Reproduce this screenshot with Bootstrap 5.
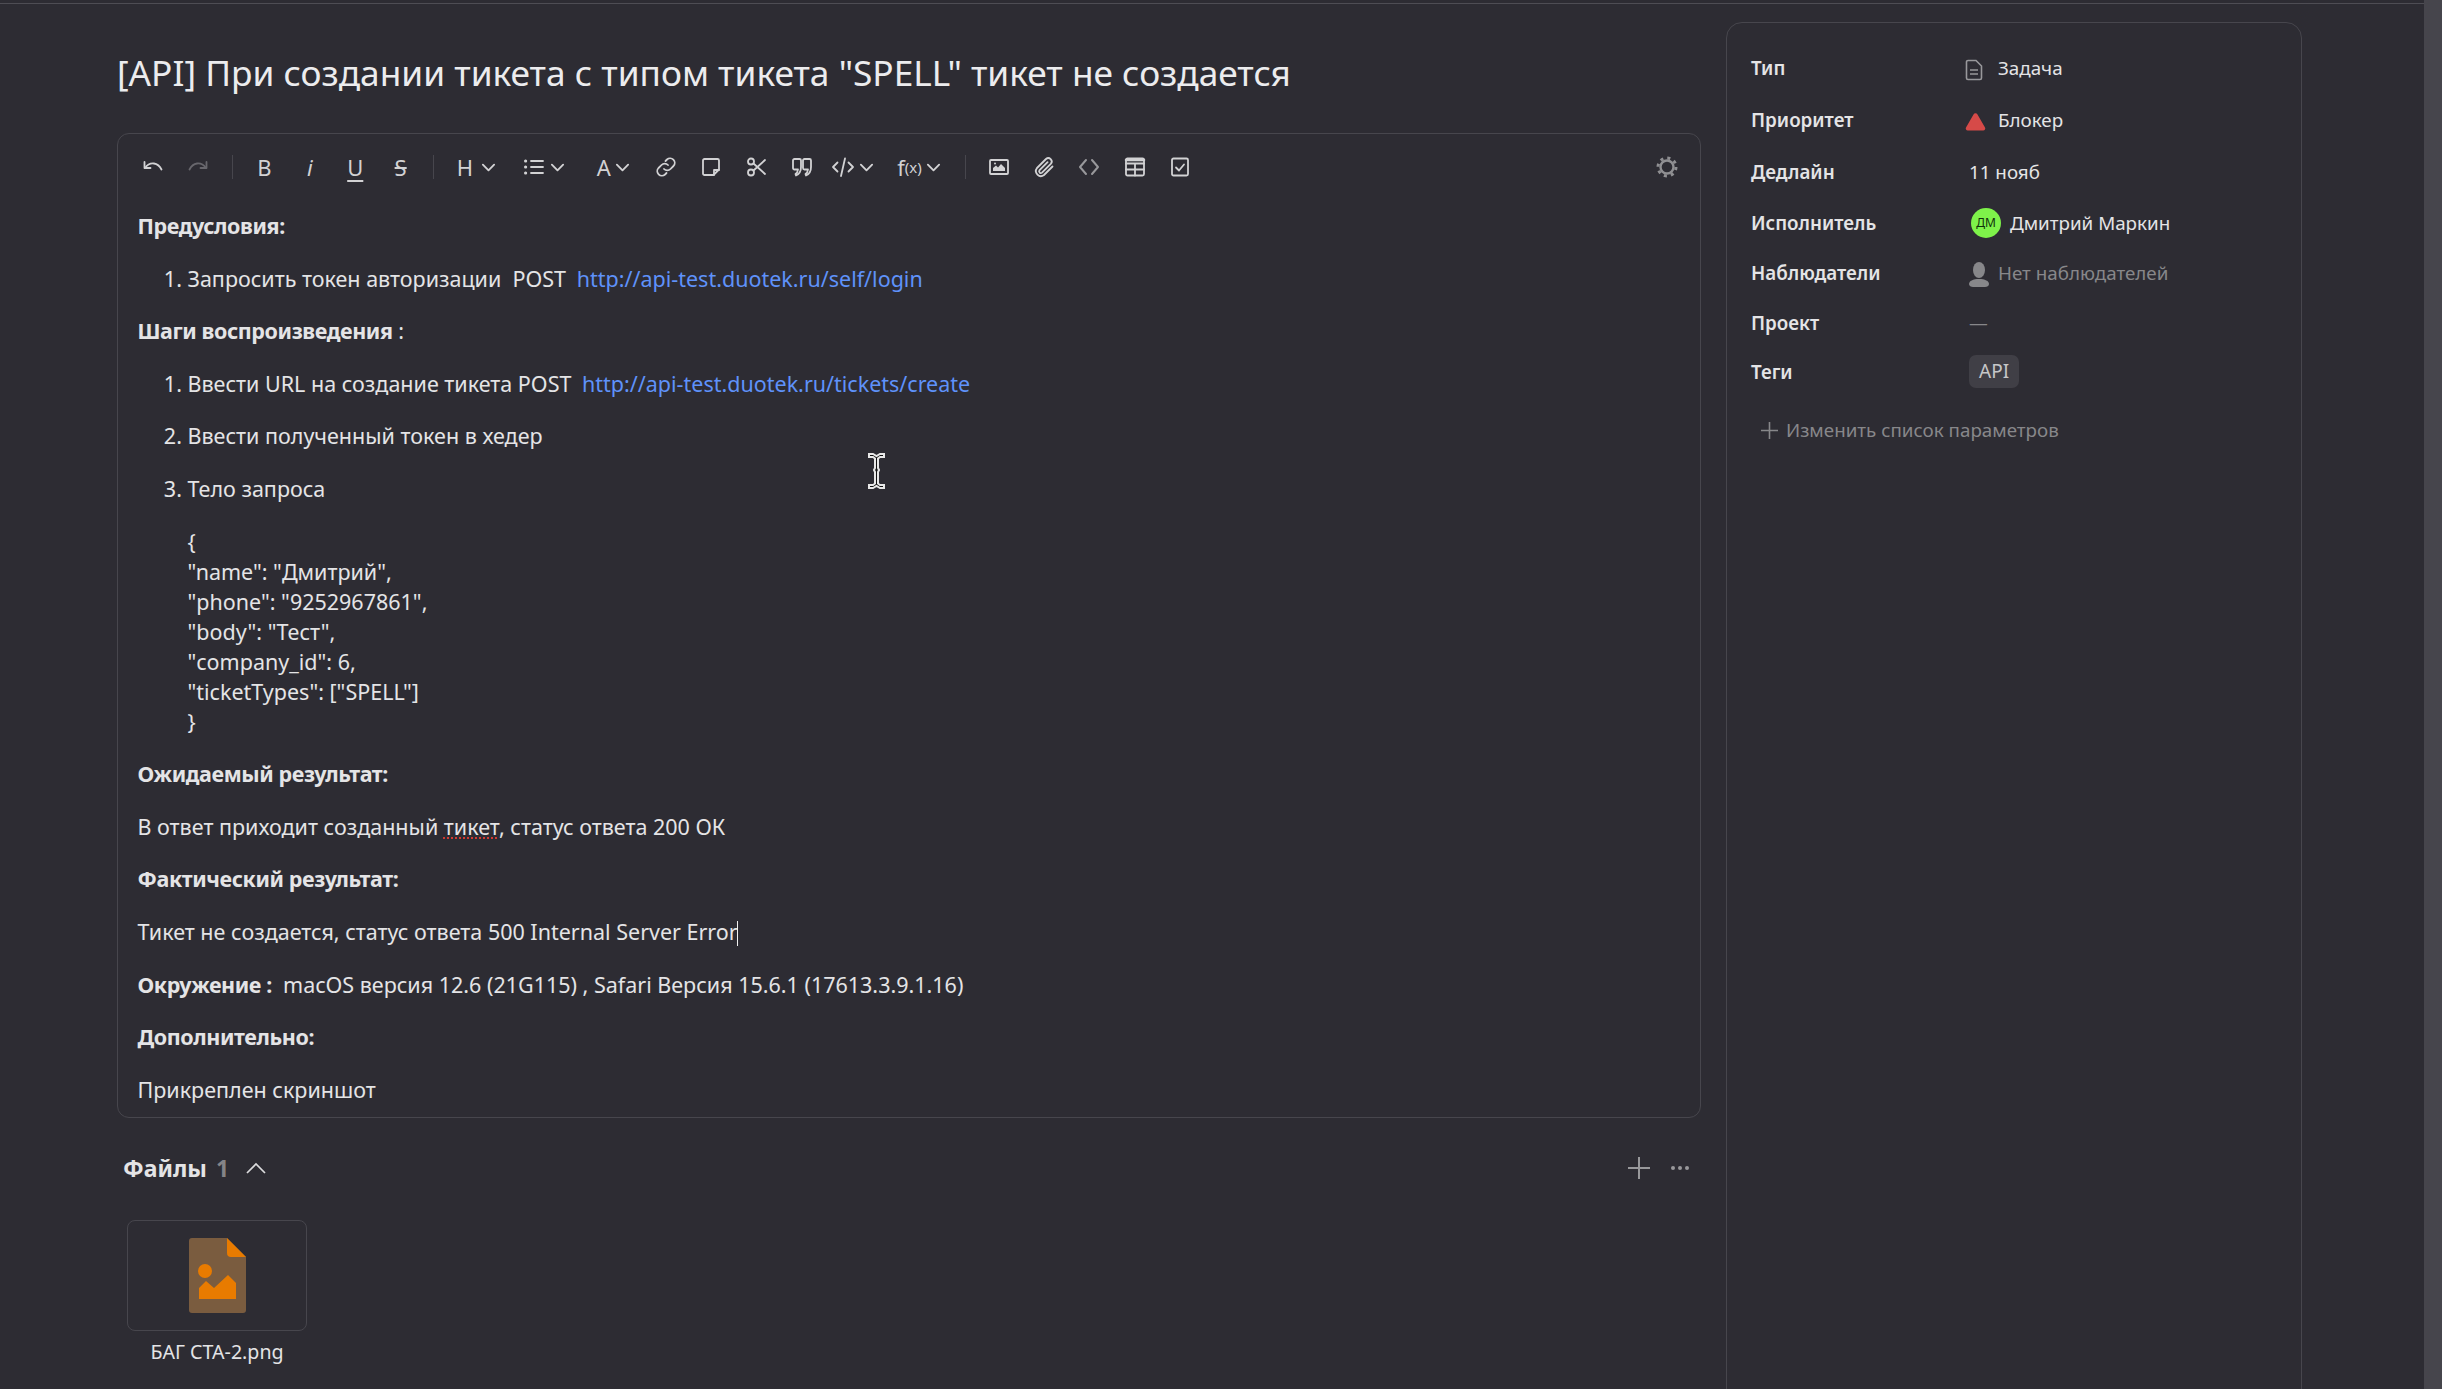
<!DOCTYPE html>
<html lang="ru">

<head>
    <meta charset="UTF-8">
    <meta name="viewport" content="width=device-width, initial-scale=1.0">
    <title>[API] При создании тикета</title>
    <link href="https://cdn.jsdelivr.net/npm/bootstrap@5.3.3/dist/css/bootstrap.min.css" rel="stylesheet">
    <style>
        html, body {
            height: 100%;
            overflow: hidden;
        }

        body {
            background: #2d2c33;
            color: #e4e4e6;
            font-family: "Noto Sans", "Liberation Sans", sans-serif;
            font-size: 21.5px;
            line-height: 30px;
        }

        .page-wrap {
            height: 100%;
            border-top: 1px solid #4e4d54;
            margin-top: 3px;
            margin-right: 18px;
            position: relative;
        }

        .page-scroll {
            position: fixed;
            top: 0;
            right: 0;
            bottom: 0;
            width: 18px;
            background: #46454c;
        }

        .main-col {
            margin-left: 117px;
            width: 1584px;
            flex: none;
        }

        .issue-title {
            font-size: 35.25px;
            font-weight: 400;
            line-height: 46px;
            margin: 45px 0 38px;
            color: #ececee;
        }

        .editor-box {
            background: transparent;
            border: 1px solid #47464d;
            border-radius: 12px;
            height: 985px;
            padding: 0 12px;
            color: inherit;
        }

        .tool-bar {
            flex: none;
            height: 66px;
            margin-bottom: 11px;
            color: #d2d2d4;
        }

        .tool-btn {
            flex: none;
            width: 45.4px;
            height: 34px;
            padding: 0;
            border: 0;
            color: inherit;
            font-size: 22px;
            line-height: 34px;
            display: flex;
            align-items: center;
            justify-content: center;
        }

        .tool-btn svg {
            width: 24px;
            height: 24px;
            fill: none;
            stroke: currentColor;
            stroke-width: 1.8;
            stroke-linecap: round;
            stroke-linejoin: round;
        }

        .tool-btn svg.chev {
            width: 15px;
            height: 15px;
            margin-left: 4px;
            stroke-width: 2;
        }

        .tool-btn.w-h svg.chev {
            margin-left: 8px;
        }

        .tool-dim {
            color: #68676d;
        }

        .tool-muted {
            color: #98989b;
        }

        .tool-under {
            text-decoration: underline;
            text-underline-offset: 4px;
        }

        .tool-sep {
            width: 1px;
            height: 24px;
            background: #47464d;
            flex: none;
        }

        .fx-small {
            font-size: 15px;
        }

        .w-h { width: 64px; margin-left: 10px; }
        .w-list { width: 59px; margin-left: 6px; }
        .w-a { width: 60px; margin-left: 10px; }
        .w-code { width: 60px; margin-left: -2px; }
        .w-fx { width: 58px; margin-left: 7px; }
        .sep-a { margin: 0 9px 0 11px; }
        .sep-b { margin-left: 10px; }
        .sep-c { margin: 0 10px 0 17px; }

        .gear-btn {
            margin-left: auto;
            margin-right: -2px;
            color: #8f8f92;
        }

        .doc-text {
            flex: none;
            padding-left: 7.5px;
        }

        .doc-text p {
            margin: 0 0 22.6px;
        }

        .doc-text ol {
            margin: 0 0 22.6px;
            padding-left: 50px;
        }

        .doc-text li + li {
            margin-top: 22.6px;
        }

        .doc-text b {
            font-weight: 700;
            letter-spacing: -0.4px;
        }

        .doc-text a {
            color: #5f92fa;
            text-decoration: none;
            margin-left: 5px;
        }

        .doc-text .code-lines {
            margin-left: 50px;
        }

        .spell-word {
            text-decoration: underline dotted #cf3a32 2px;
            text-underline-offset: 3px;
        }

        .text-caret {
            display: inline-block;
            width: 1px;
            height: 25px;
            background: #f0f0f0;
            vertical-align: -6px;
            margin-left: -1px;
        }

        .mouse-ibeam {
            position: absolute;
            left: 867px;
            top: 452px;
            width: 19px;
            height: 38px;
        }

        .files-head {
            height: 34px;
            margin: 33px 11px 35px 0;
            padding-left: 6px;
        }

        .files-title {
            font-size: 23px;
            font-weight: 700;
            color: #e4e4e6;
        }

        .files-count {
            font-size: 23px;
            font-weight: 700;
            color: #848487;
            margin-left: 9px;
        }

        .add-dots {
            margin-left: 19px;
        }

        .file-tile {
            width: 180px;
            height: 111px;
            margin-left: 10px;
            border: 1px solid #47464d;
            border-radius: 8px;
        }

        .file-name {
            width: 180px;
            margin: 6px 0 0 10px;
            text-align: center;
            font-size: 19.6px;
            line-height: 30px;
        }

        .side-panel {
            width: 576px;
            height: 1500px;
            margin: 18px 0 0 25px;
            padding: 19px 24px;
            border: 1px solid #47464d;
            border-radius: 16px;
            flex: none;
        }

        .prop-row {
            height: 51px;
            font-size: 18.8px;
        }

        .row-a { height: 52px; }
        .row-b { height: 50px; }
        .row-c { height: 49px; }

        .prop-label {
            width: 218px;
            flex: none;
            font-weight: 600;
        }

        .prop-icon {
            width: 29px;
            flex: none;
        }

        .icon-pull {
            margin-left: -4px;
            margin-right: 4px;
        }

        .prop-muted {
            color: #87878a;
        }

        .user-pic {
            width: 30px;
            height: 30px;
            margin: 0 9px 0 2px;
            background: #7ef24a;
            color: #10300a;
            font-size: 12px;
            line-height: 30px;
            text-align: center;
        }

        .tag-chip {
            padding: 0 10px;
            height: 33px;
            line-height: 33px;
            border-radius: 7px;
            background: #403f46;
            color: #c6c6c8;
            font-size: 19px;
            font-weight: 400;
        }

        .add-param {
            margin: 19px 0 0 10px;
            font-size: 18.8px;
            color: #87878a;
        }
    </style>
</head>

<body>
    <div class="page-scroll"></div>
    <div class="page-wrap d-flex">
        <div class="main-col">
            <h1 class="issue-title">[API] При создании тикета с типом тикета "SPELL" тикет не создается</h1>

            <div class="card editor-box">
                <div class="tool-bar d-flex align-items-center">
                    <button class="btn tool-btn"><svg viewBox="0 0 24 24"><path d="M3.500 7v6h6"/><path d="M4 13c2.500-3.500 5.500-5 9-4.500 3.500.5 6 3 7.500 6"/></svg></button>
                    <button class="btn tool-btn tool-dim"><svg viewBox="0 0 24 24"><path d="M20.500 7v6h-6"/><path d="M20 13c-2.500-3.500-5.500-5-9-4.500-3.500.5-6 3-7.500 6"/></svg></button>
                    <div class="tool-sep sep-a"></div>
                    <button class="btn tool-btn">B</button>
                    <button class="btn tool-btn fst-italic">i</button>
                    <button class="btn tool-btn tool-under">U</button>
                    <button class="btn tool-btn text-decoration-line-through">S</button>
                    <div class="tool-sep sep-b"></div>
                    <button class="btn tool-btn w-h">H<svg class="chev" viewBox="0 0 16 16"><path d="M2 5l6 6 6-6"/></svg></button>
                    <button class="btn tool-btn w-list"><svg viewBox="0 0 24 24"><path d="M9 6h12M9 12h12M9 18h12"/><path d="M3.500 6h.2M3.500 12h.2M3.500 18h.2" stroke-width="3"/></svg><svg class="chev" viewBox="0 0 16 16"><path d="M2 5l6 6 6-6"/></svg></button>
                    <button class="btn tool-btn w-a">A<svg class="chev" viewBox="0 0 16 16"><path d="M2 5l6 6 6-6"/></svg></button>
                    <button class="btn tool-btn"><svg viewBox="0 0 24 24"><path d="M10 14a4.500 4.500 0 0 0 6.500 0l3-3a4.600 4.600 0 0 0-6.500-6.500l-1.500 1.500"/><path d="M14 10a4.500 4.500 0 0 0-6.500 0l-3 3a4.600 4.600 0 0 0 6.500 6.500l1.500-1.500"/></svg></button>
                    <button class="btn tool-btn"><svg viewBox="0 0 24 24"><path d="M14.500 20H5.500a1.500 1.500 0 0 1-1.500-1.500v-13A1.500 1.500 0 0 1 5.500 4h13A1.500 1.500 0 0 1 20 5.500V14.500z"/><path d="M20 15h-5v5"/></svg></button>
                    <button class="btn tool-btn"><svg viewBox="0 0 24 24"><circle cx="6" cy="6.500" r="3"/><circle cx="6" cy="17.500" r="3"/><path d="M8.500 8.500L20 19M8.500 15.500L20 5"/></svg></button>
                    <button class="btn tool-btn"><svg viewBox="0 0 24 24"><path d="M3 5.500A1.500 1.500 0 0 1 4.500 4h5A1.500 1.500 0 0 1 11 5.500V12c0 4-1.500 7-5 8.500l-.5-1.500c1.500-1 2.300-2.500 2.500-4.500H4.500A1.500 1.500 0 0 1 3 13z"/><path d="M13 5.500A1.500 1.500 0 0 1 14.500 4h5A1.500 1.500 0 0 1 21 5.500V12c0 4-1.500 7-5 8.500l-.5-1.500c1.500-1 2.300-2.500 2.500-4.500h-3.500A1.500 1.500 0 0 1 13 13z"/></svg></button>
                    <button class="btn tool-btn w-code"><svg viewBox="0 0 24 24"><path d="M6.500 7.500L2 12l4.500 4.500M17.500 7.500L22 12l-4.500 4.500M14 3.500L10 21"/></svg><svg class="chev" viewBox="0 0 16 16"><path d="M2 5l6 6 6-6"/></svg></button>
                    <button class="btn tool-btn w-fx">f<span class="fx-small">(x)</span><svg class="chev" viewBox="0 0 16 16"><path d="M2 5l6 6 6-6"/></svg></button>
                    <div class="tool-sep sep-c"></div>
                    <button class="btn tool-btn"><svg viewBox="0 0 24 24"><rect x="3" y="5" width="18" height="14" rx="1"/><path d="M6 16v-3l3-2.500 2 2 3-3.500 4 4v3z" fill="currentColor" stroke="none"/><circle cx="8" cy="8.500" r="1" fill="currentColor" stroke="none"/></svg></button>
                    <button class="btn tool-btn"><svg viewBox="0 0 24 24"><path d="M20.500 11.500l-8.500 8.500a5 5 0 0 1-7-7l9-9a3.400 3.400 0 0 1 4.800 4.800l-8.800 8.800a1.700 1.700 0 0 1-2.400-2.400l8-8"/></svg></button>
                    <button class="btn tool-btn tool-muted"><svg viewBox="0 0 24 24"><path d="M9 5l-6 7 6 7M15 5l6 7-6 7" stroke-width="2"/></svg></button>
                    <button class="btn tool-btn"><svg viewBox="0 0 24 24"><rect x="3" y="3.500" width="18" height="17" rx="1.500"/><path d="M3 8.500h18M3 14.500h18M12 8.500v12"/><path d="M3 5h18" stroke-width="2.500"/></svg></button>
                    <button class="btn tool-btn"><svg viewBox="0 0 24 24"><rect x="4" y="3.500" width="16" height="17" rx="1.500"/><path d="M8 12.500l3 3 5-6"/></svg></button>
                    <button class="btn tool-btn gear-btn"><svg viewBox="0 0 24 24"><circle cx="12" cy="12" r="6.500" stroke-width="2.400"/><circle cx="12" cy="12" r="9" stroke-width="3" stroke-linecap="butt" stroke-dasharray="3.070 4"/></svg></button>
                </div>

                <div class="doc-text">
                    <p><b>Предусловия:</b></p>
                    <ol>
                        <li>Запросить токен авторизации&nbsp; POST <a href="#">http://api-test.duotek.ru/self/login</a></li>
                    </ol>
                    <p><b>Шаги воспроизведения</b> :</p>
                    <ol>
                        <li>Ввести URL на создание тикета POST <a href="#">http://api-test.duotek.ru/tickets/create</a></li>
                        <li>Ввести полученный токен в хедер</li>
                        <li>Тело запроса</li>
                    </ol>
                    <p class="code-lines">{<br>"name": "Дмитрий",<br>"phone": "9252967861",<br>"body": "Тест",<br>"company_id": 6,<br>"ticketTypes": ["SPELL"]<br>}</p>
                    <p><b>Ожидаемый результат:</b></p>
                    <p>В ответ приходит созданный <span class="spell-word">тикет</span>, статус ответа 200 ОК</p>
                    <p><b>Фактический результат:</b></p>
                    <p>Тикет не создается, статус ответа 500 Internal Server Error<span class="text-caret"></span></p>
                    <p><b>Окружение :</b>&nbsp; macOS версия 12.6 (21G115) , Safari Версия 15.6.1 (17613.3.9.1.16)</p>
                    <p><b>Дополнительно:</b></p>
                    <p>Прикреплен скриншот</p>
                </div>
            </div>

            <div class="files-head d-flex align-items-center">
                <span class="files-title">Файлы</span>
                <span class="files-count">1</span>
                <svg class="ms-3" width="22" height="14" viewBox="0 0 22 14" fill="none" stroke="#dcdcde" stroke-width="1.700"><path d="M2 12L11 3l9 9"/></svg>
                <svg class="ms-auto" width="24" height="24" viewBox="0 0 24 24" fill="none" stroke="#98989b" stroke-width="2"><path d="M12 1v22M1 12h22"/></svg>
                <svg class="add-dots" width="20" height="6" viewBox="0 0 20 6" fill="#98989b"><circle cx="3" cy="3" r="2"/><circle cx="10" cy="3" r="2"/><circle cx="17" cy="3" r="2"/></svg>
            </div>

            <div class="file-tile d-flex align-items-center justify-content-center">
                <svg width="57" height="75" viewBox="0 0 57 75">
                    <path d="M3 0H38L57 19V72a3 3 0 0 1-3 3H3a3 3 0 0 1-3-3V3a3 3 0 0 1 3-3z" fill="#7a5c3f"/>
                    <path d="M38 0L57 19H42a4 4 0 0 1-4-4z" fill="#e87b00"/>
                    <circle cx="16" cy="33" r="7" fill="#e87b00"/>
                    <path d="M10 61V50l7-7 8 7 14-13 8 8v16z" fill="#e87b00"/>
                </svg>
            </div>
            <div class="file-name">БАГ СТА-2.png</div>
        </div>

        <aside class="side-panel">
            <div class="prop-row row-a d-flex align-items-center">
                <div class="prop-label">Тип</div>
                <div class="prop-icon"><svg class="icon-pull" width="18" height="22" viewBox="0 0 18 22" fill="none" stroke="#98989b" stroke-width="1.600"><path d="M3 1.500h8l5.500 5.500v12a1.500 1.500 0 0 1-1.500 1.500H3A1.500 1.500 0 0 1 1.500 19V3A1.500 1.500 0 0 1 3 1.500z"/><path d="M5 11h8M5 15h8"/></svg></div>
                <div>Задача</div>
            </div>
            <div class="prop-row row-a d-flex align-items-center">
                <div class="prop-label">Приоритет</div>
                <div class="prop-icon"><svg class="icon-pull" width="21" height="18" viewBox="0 0 21 18"><path d="M8.500 1.500a2.300 2.300 0 0 1 4 0l7.500 13a2 2 0 0 1-1.800 3H2.800a2 2 0 0 1-1.800-3z" fill="#d64a48"/></svg></div>
                <div>Блокер</div>
            </div>
            <div class="prop-row d-flex align-items-center">
                <div class="prop-label">Дедлайн</div>
                <div>11 нояб</div>
            </div>
            <div class="prop-row d-flex align-items-center">
                <div class="prop-label">Исполнитель</div>
                <div class="user-pic rounded-circle">ДМ</div>
                <div>Дмитрий Маркин</div>
            </div>
            <div class="prop-row row-b d-flex align-items-center">
                <div class="prop-label">Наблюдатели</div>
                <div class="prop-icon"><svg width="20" height="25" viewBox="0 0 20 25" fill="#87878a"><ellipse cx="10" cy="8" rx="6" ry="8"/><path d="M0 22c0-3 4-5 10-5s10 2 10 5c0 2-2 3-4 3H4c-2 0-4-1-4-3z"/></svg></div>
                <div class="prop-muted">Нет наблюдателей</div>
            </div>
            <div class="prop-row row-c d-flex align-items-center">
                <div class="prop-label">Проект</div>
                <div class="prop-muted">—</div>
            </div>
            <div class="prop-row row-c d-flex align-items-center">
                <div class="prop-label">Теги</div>
                <span class="badge tag-chip">API</span>
            </div>
            <div class="add-param d-flex align-items-center gap-2">
                <svg width="17" height="17" viewBox="0 0 17 17" fill="none" stroke="#87878a" stroke-width="1.600"><path d="M8.500 0v17M0 8.500h17"/></svg>
                <span>Изменить список параметров</span>
            </div>
        </aside>
    </div>

    <svg class="mouse-ibeam" viewBox="0 0 19 38" fill="none">
        <path d="M2 2h4l3.500 2L13 2h4v3h-4l-2 1.500V16l1 2-1 2v11.500l2 1.500h4v3h-4l-3.500-2L6 36H2v-3h4l2-1.500V20l-1-2 1-2V6.500L6 5H2z" fill="#111" stroke="#e8e8e8" stroke-width="2"/>
    </svg>

    <script src="https://cdn.jsdelivr.net/npm/bootstrap@5.3.3/dist/js/bootstrap.bundle.min.js"></script>
</body>

</html>
